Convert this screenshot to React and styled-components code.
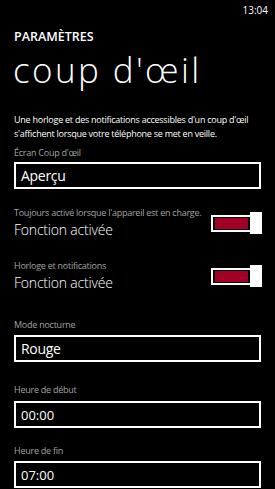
import React from "react";
import styled, { createGlobalStyle } from "styled-components";

const Global = createGlobalStyle`
  html, body { margin: 0; padding: 0; background: #000; }
  body { font-family: "Open Sans", "Noto Sans", sans-serif; color: #fff; }
  * { box-sizing: border-box; }
`;

const Screen = styled.div`
  width: 275px;
  height: 489px;
  overflow: hidden;
  background: #000;
  display: flex;
  flex-direction: column;
`;

const StatusBar = styled.div`
  display: flex;
  justify-content: flex-end;
  padding: 4px 7px 0 0;
  height: 29px;
  font-size: 10px;
  line-height: 12px;
  color: #fff;
`;

const Content = styled.div`
  display: flex;
  flex-direction: column;
  padding: 0 14px;
`;

const AppTitle = styled.div`
  font-size: 12.5px;
  font-weight: 600;
  line-height: 16px;
`;

const PageTitle = styled.h1`
  margin: 5px 0 0 -1px;
  font-size: 35px;
  font-weight: 300;
  line-height: 40px;
  letter-spacing: 2.4px;
`;

const Description = styled.p`
  margin: 23px 0 0;
  font-size: 9px;
  line-height: 13.5px;
  letter-spacing: -0.25px;
`;

const Label = styled.div`
  margin-top: ${(p) => p.$top ?? 9}px;
  font-size: 9px;
  line-height: 13px;
  letter-spacing: -0.25px;
  color: #a3a3a3;
  white-space: nowrap;
`;

const Field = styled.div`
  margin-top: ${(p) => p.$top ?? 4}px;
  height: 27px;
  border: 2px solid #fff;
  display: flex;
  align-items: center;
  padding-left: 5px;
  font-size: ${(p) => p.$size || 14}px;
  letter-spacing: ${(p) => (p.$size ? 0 : -0.3)}px;
`;

const ToggleRow = styled.div`
  margin-top: ${(p) => p.$top}px;
  display: flex;
  align-items: center;
  justify-content: space-between;
`;

const ToggleText = styled.div`
  display: flex;
  flex-direction: column;
`;

const ToggleValue = styled.div`
  margin-top: 2px;
  font-size: 14px;
  font-weight: 300;
  line-height: 18px;
  letter-spacing: -0.2px;
`;

const Toggle = styled.div`
  position: relative;
  width: 51px;
  height: 22px;
  margin-right: -1px;
  flex-shrink: 0;
`;

const Track = styled.div`
  position: absolute;
  left: 0;
  top: 3px;
  width: 41px;
  height: 17px;
  border: 2px solid #fff;
  padding: 1px 2px;
  &::after {
    content: "";
    display: block;
    width: 100%;
    height: 100%;
    background: #a20025;
  }
`;

const Thumb = styled.div`
  position: absolute;
  right: 0;
  top: 0;
  width: 12px;
  height: 22px;
  background: #fff;
`;

export default function App() {
  return (
    <>
      <Global />
      <Screen>
        <StatusBar>13:04</StatusBar>
        <Content>
          <AppTitle>PARAMÈTRES</AppTitle>
          <PageTitle>coup d'œil</PageTitle>
          <Description>
            Une horloge et des notifications accessibles d'un coup d'œil s'affichent lorsque votre téléphone se met en veille.
          </Description>
          <Label $top={6}>Écran Coup d'œil</Label>
          <Field $top={3}>Aperçu</Field>
          <ToggleRow $top={17}>
            <ToggleText>
              <Label $top={0}>Toujours activé lorsque l'appareil est en charge.</Label>
              <ToggleValue>Fonction activée</ToggleValue>
            </ToggleText>
            <Toggle><Track /><Thumb /></Toggle>
          </ToggleRow>
          <ToggleRow $top={20}>
            <ToggleText>
              <Label $top={0}>Horloge et notifications</Label>
              <ToggleValue>Fonction activée</ToggleValue>
            </ToggleText>
            <Toggle><Track /><Thumb /></Toggle>
          </ToggleRow>
          <Label $top={26}>Mode nocturne</Label>
          <Field $top={4}>Rouge</Field>
          <Label $top={21}>Heure de début</Label>
          <Field $top={5} $size={13}>00:00</Field>
          <Label $top={16}>Heure de fin</Label>
          <Field $top={4} $size={13}>07:00</Field>
        </Content>
      </Screen>
    </>
  );
}
